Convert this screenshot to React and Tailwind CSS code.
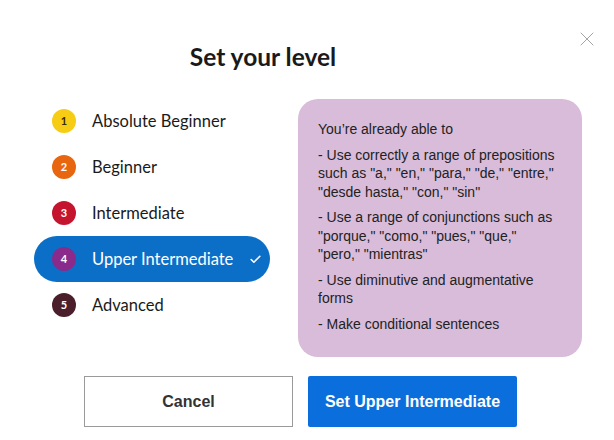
import { Check, X } from 'lucide-react'

const levels = [
  { n: 1, name: 'Absolute Beginner', color: 'bg-[#f6cd14] text-[#3a2a00]' },
  { n: 2, name: 'Beginner', color: 'bg-[#e8660f] text-white' },
  { n: 3, name: 'Intermediate', color: 'bg-[#c5142e] text-white' },
  { n: 4, name: 'Upper Intermediate', color: 'bg-[#8a2b8c] text-white' },
  { n: 5, name: 'Advanced', color: 'bg-[#4a1e2a] text-white' },
]

const points = [
  'You\u2019re already able to',
  '- Use correctly a range of prepositions such as "a," "en," "para," "de," "entre," "desde hasta," "con," "sin"',
  '- Use a range of conjunctions such as "porque," "como," "pues," "que," "pero," "mientras"',
  '- Use diminutive and augmentative forms',
  '- Make conditional sentences',
]

export default function App() {
  const selected = 4

  return (
    <div className="relative w-[614px] h-[440px] bg-white font-['Lato',sans-serif] text-[#1a1a1a]">
      <button type="button" className="absolute left-[575px] top-[27px] text-[#9a9a9a]">
        <X className="h-[24px] w-[24px]" strokeWidth={0.9} />
      </button>

      <div className="w-[526px] pt-[41px] text-center text-[24.5px] leading-[32px] font-bold">Set your level</div>

      <div className="flex mt-[25px] pl-[34px] gap-[28px]">
        <ul className="w-[236px]">
          {levels.map((l) => (
            <li
              key={l.n}
              className={`h-[46px] flex items-center gap-[16px] pl-[18px] pr-[12px] rounded-full text-[16.5px] whitespace-nowrap ${
                l.n === selected ? 'bg-[#0b6fc8] text-white' : ''
              }`}
            >
              <span
                className={`h-[24px] w-[24px] rounded-full flex items-center justify-center text-[11px] font-bold shrink-0 ${l.color}`}
              >
                {l.n}
              </span>
              <span className="flex-1">{l.name}</span>
              {l.n === selected ? <Check className="h-[13px] w-[13px] shrink-0" strokeWidth={3} /> : null}
            </li>
          ))}
        </ul>

        <div className="mt-[1px] w-[284px] h-[258px] rounded-[20px] bg-[#d8bcd9] pt-[21px] pl-[20px] pr-[24px] font-['Liberation_Sans',Arial,sans-serif] text-[14px] leading-[18.5px] text-[#222] flex flex-col gap-[7px]">
          {points.map((p) => (
            <p key={p}>{p}</p>
          ))}
        </div>
      </div>

      <div className="flex gap-[15px] pl-[84px] mt-[19px] font-['Liberation_Sans',Arial,sans-serif] text-[16px] font-bold">
        <button type="button" className="w-[209px] h-[51px] border border-[#9a9a9a] text-[#333] bg-white">
          Cancel
        </button>
        <button type="button" className="w-[209px] h-[51px] rounded-[2px] bg-[#0a6fdd] text-white">
          Set Upper Intermediate
        </button>
      </div>
    </div>
  )
}
